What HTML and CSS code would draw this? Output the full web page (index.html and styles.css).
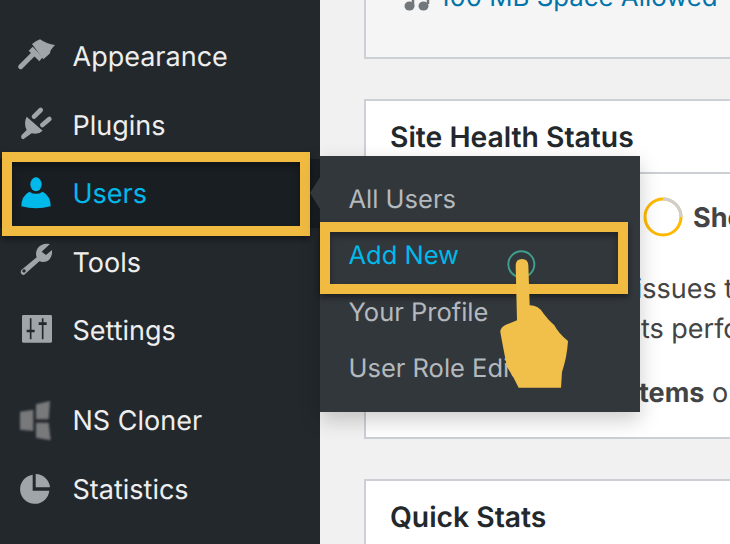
FILE: index.html
```html
<!DOCTYPE html>
<html lang="en">
<head>
    <meta charset="UTF-8">
    <title>Dashboard</title>
    <link rel="stylesheet" href="styles.css">
</head>
<body>
    <nav class="sidebar">
        <ul class="menu">
            <li class="menu-item">
                <svg class="menu-icon" viewBox="45 51 120 120"><path d="M62 140L98 104" stroke="#a0a5aa" stroke-width="15" stroke-linecap="round"/><path d="M86 92L118 124L128 112L98 80Z" fill="#a0a5aa"/><path d="M96 72Q110 62 120 58Q140 72 165 75Q150 90 150 100Q140 110 130 118Z" fill="#a0a5aa"/></svg>
                <span>Appearance</span>
            </li>
            <li class="menu-item">
                <svg class="menu-icon" viewBox="45 255 120 120"><path d="M80 290L128 332Q115 345 95 340L70 358Q60 355 65 345L80 330Q70 310 80 290Z" fill="#a0a5aa"/><path d="M102 290L122 270M127 315L148 297" stroke="#a0a5aa" stroke-width="14" stroke-linecap="round"/></svg>
                <span>Plugins</span>
            </li>
            <li class="menu-item menu-item-active">
                <svg class="menu-icon" viewBox="45 459 120 120"><ellipse cx="108" cy="490" rx="17" ry="21" fill="#00b9eb"/><path d="M64 556Q64 525 88 512Q108 525 128 512Q152 525 152 556Q108 568 64 556Z" fill="#00b9eb"/></svg>
                <span>Users</span>
                <div class="highlight highlight-users"></div>
                <div class="submenu">
                    <a class="submenu-item">All Users</a>
                    <a class="submenu-item submenu-item-active">Add New</a>
                    <a class="submenu-item">Your Profile</a>
                    <a class="submenu-item">User Role Editor</a>
                    <div class="highlight highlight-add"></div>
                    <svg class="hand" viewBox="596 296 210 420"><circle cx="663" cy="342" r="39" fill="none" stroke="#3f9d8c" stroke-width="6"/><path d="M646 345Q647 326 665 326Q683 326 684 345L688 465Q715 465 730 490Q745 510 762 525Q775 550 803 572Q800 620 785 665L782 712L655 712Q640 680 620 650Q608 590 600 545Q600 530 620 522L650 510Z" fill="#f0c04a"/></svg>
                </div>
            </li>
            <li class="menu-item">
                <svg class="menu-icon" viewBox="45 666 120 120"><path fill-rule="evenodd" d="M150 672Q125 668 113 685Q105 698 110 712L64 750Q58 762 72 765L118 724Q135 730 147 720Q158 708 156 690L138 705L125 695ZM72 748a5 5 0 1 0 .1 0Z" fill="#a0a5aa"/></svg>
                <span>Tools</span>
            </li>
            <li class="menu-item">
                <svg class="menu-icon" viewBox="45 90 120 120"><rect x="66" y="105" width="90" height="83" rx="4" fill="#a0a5aa"/><path d="M92 115V178M128 115V178" stroke="#23282d" stroke-width="5"/><path d="M80 153H104M116 131H140" stroke="#23282d" stroke-width="8"/></svg>
                <span>Settings</span>
            </li>
            <li class="menu-item menu-item-gap">
                <svg class="menu-icon icon-soft" viewBox="45 370 120 120"><path d="M60 402L100 396V460L60 456Z" fill="#77797b"/><path d="M108 380L150 370L146 425H108Z" fill="#77797b"/><path d="M108 435H146L152 488L108 480Z" fill="#77797b"/></svg>
                <span>NS Cloner</span>
            </li>
            <li class="menu-item">
                <svg class="menu-icon" viewBox="45 567 120 120"><path d="M98 584A44 44 0 1 0 148 632L98 632Z" fill="#a0a5aa"/><path d="M107 582A44 44 0 0 1 150 622L107 622Z" fill="#a0a5aa"/></svg>
                <span>Statistics</span>
            </li>
        </ul>
    </nav>

    <main class="content">
        <section class="card card-muted">
            <div class="storage">
                <svg class="storage-icon" viewBox="0 0 26 26"><path d="M9 19V4L24 1V17" fill="none" stroke="#72777c" stroke-width="2.5"/><ellipse cx="5.500" cy="19" rx="5" ry="4.500" fill="#72777c"/><ellipse cx="19.500" cy="19" rx="5" ry="4.500" fill="#72777c"/></svg>
                <a class="storage-link">100 MB Space Allowed</a>
            </div>
        </section>

        <section class="card card-health">
            <h2 class="card-title">Site Health Status</h2>
            <div class="health-body">
                <div class="health-status">
                    <svg class="spinner" viewBox="0 0 40 40"><circle cx="20" cy="20" r="18" fill="none" stroke="#ffb900" stroke-width="3"/><path d="M20 2A18 18 0 0 1 38 20" fill="none" stroke="#ccd0d4" stroke-width="3"/></svg>
                    <strong class="health-label">Should be improved</strong>
                </div>
                <p class="health-line health-line-issues">Your site has critical issues that</p>
                <p class="health-line health-line-perf">be addressed to improve its performance</p>
                <p class="health-line health-line-items">Take a look at the <b>5 items</b> on the</p>
            </div>
        </section>

        <section class="card">
            <h2 class="card-title">Quick Stats</h2>
        </section>
    </main>
</body>
</html>
```

FILE: styles.css
```css
* {
    box-sizing: border-box;
}
html, body {
    height: 544px;
    overflow: hidden;
}
body {
    margin: 0;
    display: flex;
    background-color: #f1f1f1;
    font-family: 'Inter', 'Liberation Sans', sans-serif;
    text-rendering: geometricPrecision;
}
.sidebar {
    width: 320px;
    flex-shrink: 0;
    background-color: #23282d;
    position: relative;
    z-index: 2;
}
.menu {
    list-style: none;
    margin: 0;
    padding: 22.800px 0 0;
}
.menu-item {
    position: relative;
    display: flex;
    align-items: center;
    height: 68.350px;
    padding-left: 15px;
    gap: 17.500px;
    font-size: 27px;
    color: #eee;
}
.menu-item-gap {
    margin-top: 22px;
}
.menu-item-active {
    background-color: #191e23;
    color: #00b9eb;
}
.menu-icon {
    width: 40px;
    height: 40px;
    flex-shrink: 0;
}
.icon-soft {
    filter: blur(0.8px);
}
.highlight {
    position: absolute;
    border: 10px solid #f0bb40;
    box-shadow: 0 3px 6px rgba(0,0,0,0.45), inset 0 4px 6px rgba(0,0,0,0.35);
}
.highlight-users {
    left: 2px;
    top: -7.500px;
    width: 308px;
    height: 84px;
}
.highlight-add {
    left: 0;
    top: 66px;
    width: 308px;
    height: 72px;
}
.submenu {
    position: absolute;
    left: 320px;
    top: -3.500px;
    width: 320px;
    height: 256px;
    padding-top: 16px;
    background-color: #32373c;
    box-shadow: 0 8px 20px rgba(0,0,0,0.2);
}
.submenu::before {
    content: '';
    position: absolute;
    left: -10px;
    top: 21px;
    border-top: 16px solid transparent;
    border-bottom: 16px solid transparent;
    border-right: 10px solid #32373c;
}
.submenu-item {
    display: block;
    height: 56.300px;
    line-height: 55px;
    padding-left: 28.500px;
    font-size: 25.500px;
    color: #b4b9be;
}
.submenu-item-active {
    color: #00b9eb;
}
.hand {
    position: absolute;
    left: 178.700px;
    top: 92.700px;
    width: 70px;
    height: 140px;
}
.content {
    flex: 1;
    min-width: 0;
    padding-left: 44px;
    display: flex;
    flex-direction: column;
    gap: 40px;
}
.card {
    width: 600px;
    flex-shrink: 0;
    background-color: #fff;
    border: 2px solid #ccd0d4;
}
.card-muted {
    height: 89px;
    margin-top: -30px;
    background-color: #f5f5f5;
    border-top: 0;
}
.storage {
    display: flex;
    align-items: flex-end;
    height: 43px;
    padding-left: 38px;
    gap: 11px;
}
.storage-icon {
    width: 26px;
    height: 26px;
}
.storage-link {
    font-size: 25.800px;
    line-height: 30px;
    margin-left: -2px;
    color: #0073aa;
}
.card-health {
    height: 340px;
}
.card-title {
    margin: 0;
    height: 73px;
    padding-left: 24px;
    line-height: 72px;
    font-size: 28.300px;
    font-weight: 600;
    color: #23282d;
    border-bottom: 2px solid #ccd0d4;
}
.health-body {
    padding: 23px 0 0 25px;
    color: #444;
    font-size: 27px;
}
.health-status {
    display: flex;
    align-items: center;
    gap: 10px;
    padding-left: 252px;
    height: 40px;
}
.health-label {
    font-weight: 700;
    white-space: nowrap;
}
.spinner {
    width: 40px;
    height: 40px;
    flex-shrink: 0;
}
.health-line {
    margin: 0;
    height: 40px;
    line-height: 40px;
    white-space: nowrap;
}
.health-line-issues {
    margin: 32px 0 0 -20px;
}
.health-line-perf {
    margin-left: -81px;
}
.health-line-items {
    margin: 24px 0 0 -15px;
}
```
